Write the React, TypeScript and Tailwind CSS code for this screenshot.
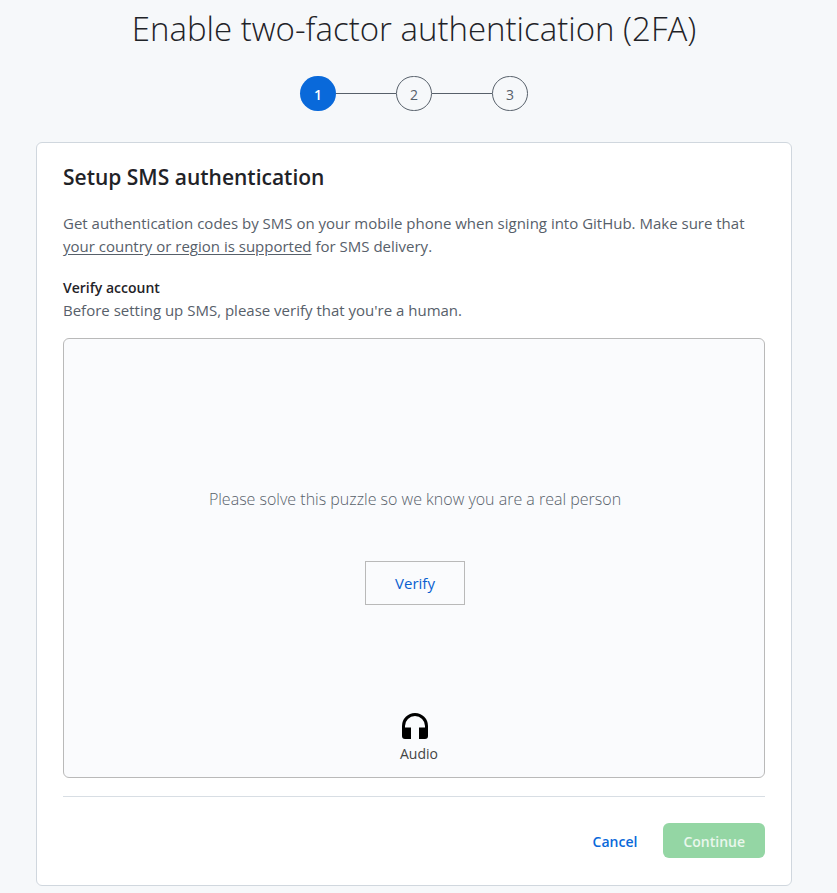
import React from "react";

const steps = [1, 2, 3];

function Stepper() {
  return (
    <ol className="mt-[23px] flex items-center justify-center" aria-label="Progress">
      {steps.map((step) => (
        <li key={step} className="flex items-center">
          {step > 1 && <span className="h-px w-15 bg-[#57606a]" />}
          <span
            aria-current={step === 1 ? "step" : undefined}
            className={
              step === 1
                ? "flex h-[35px] w-9 items-center justify-center rounded-full bg-[#0969da] pt-0.5 text-sm font-semibold text-white"
                : "flex h-[35px] w-9 items-center justify-center rounded-full border border-[#57606a] pt-0.5 text-sm font-medium text-[#57606a]"
            }
          >
            {step}
          </span>
        </li>
      ))}
    </ol>
  );
}

function HeadphonesIcon() {
  return (
    <svg viewBox="0 0 26 26" className="size-[26px]" fill="#000" aria-hidden="true">
      <path d="M13 0A13 13 0 0 0 0 13v10a3 3 0 0 0 3 3h6V14.5H3V13a10 10 0 0 1 20 0v1.500h-6V26h6a3 3 0 0 0 3-3V13A13 13 0 0 0 13 0Z" />
    </svg>
  );
}

export default function App() {
  return (
    <main className="min-h-screen bg-[#f6f8fa] pr-[45px] pb-2 pl-9 font-['Open_Sans','Noto_Sans',sans-serif] text-[#1f2328]">
      <h1 className="pt-[5px] text-center text-[33px] leading-12 font-light">
        Enable two-factor authentication (2FA)
      </h1>
      <Stepper />
      <section className="mx-auto mt-[31px] max-w-[756px] rounded-md border border-[#d0d7de] bg-white px-[26px] pt-5 pb-[27px]">
        <h2 className="text-[21px] leading-7 font-semibold">Setup SMS authentication</h2>
        <p className="mt-[21px] text-[15px] leading-[23px] text-[#57606a]">
          Get authentication codes by SMS on your mobile phone when signing into GitHub. Make sure that{" "}
          <a href="#countries" className="underline underline-offset-2">your country or region is supported</a> for SMS delivery.
        </p>
        <h3 className="mt-[18px] text-sm leading-[23px] font-semibold">Verify account</h3>
        <p className="text-[15px] leading-[23px] text-[#57606a]">
          Before setting up SMS, please verify that you're a human.
        </p>
        <div className="mt-4 flex h-[440px] flex-col items-center rounded-md border border-[#b9b9b9] bg-[#fafbfd] pb-[11px] pl-0.5">
          <p className="mt-[148px] text-base leading-6 font-light text-[#57606a]">
            Please solve this puzzle so we know you are a real person
          </p>
          <button type="button" className="mt-[50px] h-11 w-[100px] border border-[#b9b9b9] text-[15px] text-[#0960d0]">
            Verify
          </button>
          <button type="button" className="mt-auto flex flex-col items-center gap-[3px] text-sm leading-6 text-[#444]">
            <HeadphonesIcon />
            <span className="pl-2">Audio</span>
          </button>
        </div>
        <div className="mt-[18px] flex justify-end gap-2 border-t border-[#d8dee4] pt-[26px] text-sm font-semibold">
          <button type="button" className="px-[18px] pt-0.5 text-[#0969da]">Cancel</button>
          <button type="button" disabled className="h-[35px] rounded-md bg-[#94d6a4] px-5 pt-0.5 text-white/80">Continue</button>
        </div>
      </section>
    </main>
  );
}
